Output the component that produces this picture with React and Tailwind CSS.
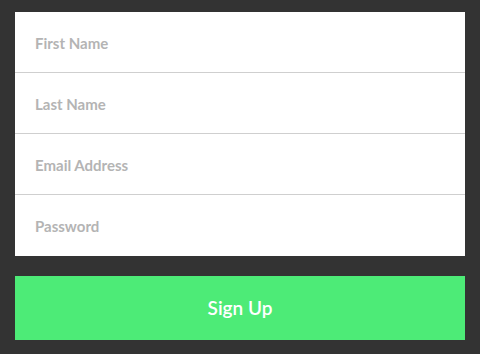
import React from "react";

export default function App() {
  const fields = ["First Name", "Last Name", "Email Address", "Password"];
  return (
    <div className="h-[354px] w-[480px] bg-[#333333] px-[15px] pt-[12px]" style={{ fontFamily: "Lato, 'Open Sans', sans-serif" }}>
      <div className="bg-white flex flex-col">
        {fields.map((f, i) => (
          <div
            key={f}
            className={
              i < fields.length - 1
                ? "h-[61px] border-b border-[#cfcfcf] flex items-center pl-[20px] pt-[2px] text-[15px] font-bold text-[#b4b4b4]"
                : "h-[61px] flex items-center pl-[20px] pt-[2px] text-[15px] font-bold text-[#b4b4b4]"
            }
          >
            {f}
          </div>
        ))}
      </div>
      <button className="mt-[20px] w-full h-[64px] bg-[#4deb77] text-white text-[19px] font-semibold flex items-center justify-center">
        Sign Up
      </button>
    </div>
  );
}
